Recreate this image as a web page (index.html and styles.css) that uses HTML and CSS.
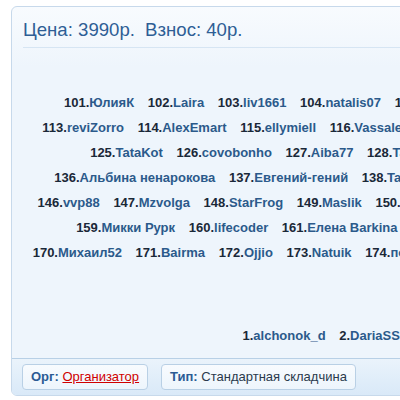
FILE: index.html
```html
<!DOCTYPE html>
<html lang="ru">
<head>
<meta charset="utf-8">
<title>Складчина</title>
<link rel="stylesheet" href="styles.css">
</head>
<body>
<div class="box">
  <div class="head">
    <h1 class="price"><span>Цена: 3990р.</span> <span class="fee">Взнос: 40р.</span></h1>
  </div>
  <div class="members">
    <div class="row">
      <span class="m"><b>101.</b><a>ЮлияК</a></span> <span class="m"><b>102.</b><a>Laira</a></span> <span class="m"><b>103.</b><a>liv1661</a></span> <span class="m"><b>104.</b><a>natalis07</a></span> <span class="m"><b>105.</b><a>Olgaa2012</a></span> <span class="m"><b>106.</b><a>Marusya</a></span> <span class="m"><b>107.</b><a>Kiska1980</a></span> <span class="m"><b>108.</b><a>Lenok</a></span> <span class="m"><b>109.</b><a>Tanya_s</a></span> <span class="m"><b>110.</b><a>Irina</a></span> <span class="m"><b>111.</b><a>Svetik</a></span> <span class="m"><b>112.</b><a>Natal</a></span>
    </div>
    <div class="row">
      <span class="m"><b>113.</b><a>reviZorro</a></span> <span class="m"><b>114.</b><a>AlexEmart</a></span> <span class="m"><b>115.</b><a>ellymiell</a></span> <span class="m"><b>116.</b><a>Vassalena</a></span> <span class="m"><b>117.</b><a>Milana_77</a></span> <span class="m"><b>118.</b><a>Katrin</a></span> <span class="m"><b>119.</b><a>Olesya</a></span> <span class="m"><b>120.</b><a>Loranna</a></span> <span class="m"><b>121.</b><a>Anna</a></span> <span class="m"><b>122.</b><a>Marina</a></span> <span class="m"><b>123.</b><a>Vikasun</a></span> <span class="m"><b>124.</b><a>Helga</a></span>
    </div>
    <div class="row">
      <span class="m"><b>125.</b><a>TataKot</a></span> <span class="m"><b>126.</b><a>covobonho</a></span> <span class="m"><b>127.</b><a>Aiba77</a></span> <span class="m"><b>128.</b><a>Tatiana</a></span> <span class="m"><b>129.</b><a>Olga_1985</a></span> <span class="m"><b>130.</b><a>Nadin</a></span> <span class="m"><b>131.</b><a>Lisa_2010</a></span> <span class="m"><b>132.</b><a>Dinara77</a></span> <span class="m"><b>133.</b><a>Katenok</a></span> <span class="m"><b>134.</b><a>Ruta</a></span> <span class="m"><b>135.</b><a>Alla</a></span>
    </div>
    <div class="row">
      <span class="m"><b>136.</b><a>Альбина ненарокова</a></span> <span class="m"><b>137.</b><a>Евгений-гений</a></span> <span class="m"><b>138.</b><a>Tanyusha</a></span> <span class="m"><b>139.</b><a>Inna_kotik</a></span> <span class="m"><b>140.</b><a>Sveta_1978</a></span> <span class="m"><b>141.</b><a>Lana_2000</a></span> <span class="m"><b>142.</b><a>Nika</a></span> <span class="m"><b>143.</b><a>Yana_999</a></span> <span class="m"><b>144.</b><a>Lilac</a></span> <span class="m"><b>145.</b><a>Zoya</a></span>
    </div>
    <div class="row">
      <span class="m"><b>146.</b><a>vvp88</a></span> <span class="m"><b>147.</b><a>Mzvolga</a></span> <span class="m"><b>148.</b><a>StarFrog</a></span> <span class="m"><b>149.</b><a>Maslik</a></span> <span class="m"><b>150.</b><a>Alena_1988</a></span> <span class="m"><b>151.</b><a>Ira</a></span> <span class="m"><b>152.</b><a>Veronika</a></span> <span class="m"><b>153.</b><a>Galaxy77</a></span> <span class="m"><b>154.</b><a>Ksu</a></span> <span class="m"><b>155.</b><a>Lina</a></span> <span class="m"><b>156.</b><a>Maya_2012</a></span> <span class="m"><b>157.</b><a>Rita</a></span> <span class="m"><b>158.</b><a>Olan</a></span>
    </div>
    <div class="row">
      <span class="m"><b>159.</b><a>Микки Рурк</a></span> <span class="m"><b>160.</b><a>lifecoder</a></span> <span class="m"><b>161.</b><a>Елена Barkina</a></span> <span class="m"><b>162.</b><a>Nata</a></span> <span class="m"><b>163.</b><a>Olga</a></span> <span class="m"><b>164.</b><a>Ira</a></span> <span class="m"><b>165.</b><a>Vera</a></span> <span class="m"><b>166.</b><a>Dasha_1990</a></span> <span class="m"><b>167.</b><a>Masha</a></span> <span class="m"><b>168.</b><a>Sonya_2011</a></span> <span class="m"><b>169.</b><a>Nina_sl</a></span>
    </div>
    <div class="row">
      <span class="m"><b>170.</b><a>Михаил52</a></span> <span class="m"><b>171.</b><a>Bairma</a></span> <span class="m"><b>172.</b><a>Ojjio</a></span> <span class="m"><b>173.</b><a>Natuik</a></span> <span class="m"><b>174.</b><a>поля</a></span> <span class="m"><b>175.</b><a>Anna_1984</a></span> <span class="m"><b>176.</b><a>Tina_2005</a></span> <span class="m"><b>177.</b><a>Lera</a></span> <span class="m"><b>178.</b><a>Zhenya</a></span> <span class="m"><b>179.</b><a>Ella_777</a></span> <span class="m"><b>180.</b><a>Alisa</a></span> <span class="m"><b>181.</b><a>Rinata</a></span> <span class="m"><b>182.</b><a>Kiral</a></span>
    </div>
  </div>
  <div class="members reserve">
    <div class="row">
      <span class="m"><b>1.</b><a>alchonok_d</a></span> <span class="m"><b>2.</b><a>DariaSS</a></span> <span class="m"><b>3.</b><a>Olga</a></span> <span class="m"><b>4.</b><a>Nina</a></span> <span class="m"><b>5.</b><a>Anna</a></span> <span class="m"><b>6.</b><a>Vika</a></span> <span class="m"><b>7.</b><a>Lenas</a></span> <span class="m"><b>8.</b><a>Irina</a></span> <span class="m"><b>9.</b><a>Marina</a></span> <span class="m"><b>10.</b><a>Svetlana</a></span>
    </div>
  </div>
  <div class="foot">
    <span class="tag"><b>Орг:</b> <a class="org">Организатор</a></span>
    <span class="tag"><b>Тип:</b> Стандартная складчина</span>
  </div>
</div>
</body>
</html>
```
FILE: styles.css
```css
html, body {
  margin: 0;
  padding: 0;
  background: #ffffff;
  overflow: hidden;
}

body {
  font-family: "Liberation Sans", Arial, sans-serif;
  font-size: 13px;
  color: #1e2d3d;
}

.box {
  box-sizing: border-box;
  width: 1100px;
  margin: 6px 0 0 11px;
  border: 1px solid #c7d9eb;
  border-radius: 6px;
  background: linear-gradient(#f8fbfe 0, #eef5fc 60px, #eef5fc 100%);
  overflow: hidden;
}

.head {
  padding: 12px 11px 0 11px;
}

.price {
  margin: 0;
  padding-bottom: 6px;
  border-bottom: 1px solid #d6e5f3;
  font-weight: normal;
  font-size: 18.6px;
  line-height: 22px;
  color: #2e5e95;
}

.price .fee {
  margin-left: 5px;
}

.members {
  margin-top: 42px;
  text-align: center;
  white-space: nowrap;
}

.members.reserve {
  margin-top: 58px;
  margin-bottom: 10px;
}

.row {
  line-height: 25px;
}

.m {
  margin: 0 5px;
  font-weight: bold;
}

.m b {
  color: #1a2838;
}

.m a {
  color: #2b5a8b;
}

.foot {
  display: flex;
  gap: 13px;
  padding: 5px 10px 5px 10px;
  border-top: 1px solid #b8d0e6;
  background: linear-gradient(#eaf3fb, #d9e9f8);
}

.tag {
  box-sizing: border-box;
  height: 26px;
  padding: 0 8px;
  border: 1px solid #b9d0e5;
  border-radius: 4px;
  background: linear-gradient(#f8fbfe, #edf5fc);
  line-height: 24px;
  color: #2a3a4c;
}

.tag b {
  color: #2b5b94;
}

.tag .org {
  color: #d00000;
  text-decoration: underline;
}
```
